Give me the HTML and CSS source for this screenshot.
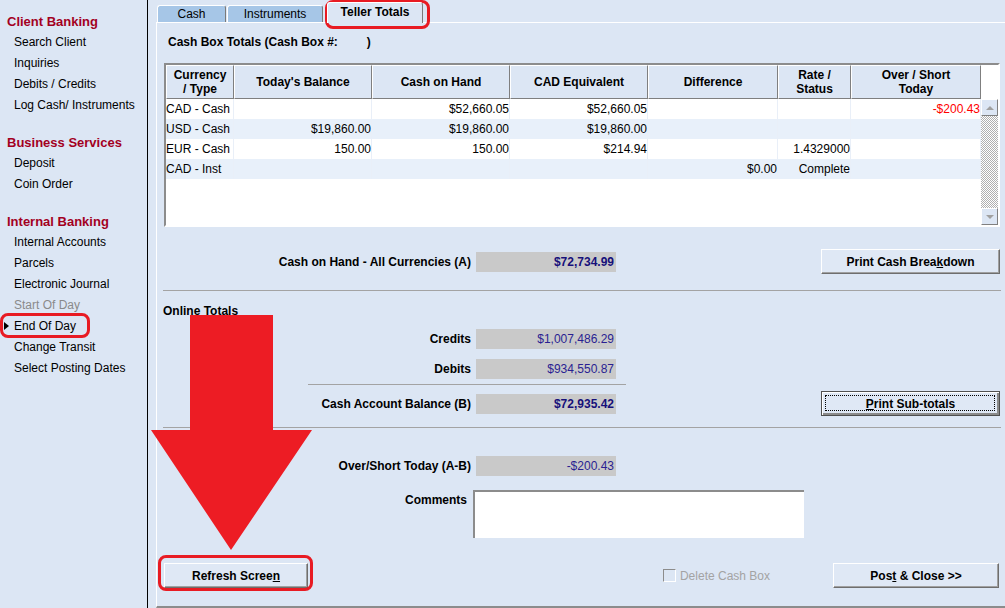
FILE: index.html
```html
<!DOCTYPE html>
<html>
<head>
<meta charset="utf-8">
<title>Teller Totals</title>
<link rel="stylesheet" href="styles.css">
</head>
<body>
<div class="app">
  <nav class="sidebar">
    <div class="group">
      <div class="group-title">Client Banking</div>
      <div class="item">Search Client</div>
      <div class="item">Inquiries</div>
      <div class="item">Debits / Credits</div>
      <div class="item">Log Cash/ Instruments</div>
    </div>
    <div class="group">
      <div class="group-title">Business Services</div>
      <div class="item">Deposit</div>
      <div class="item">Coin Order</div>
    </div>
    <div class="group">
      <div class="group-title">Internal Banking</div>
      <div class="item">Internal Accounts</div>
      <div class="item">Parcels</div>
      <div class="item">Electronic Journal</div>
      <div class="item disabled">Start Of Day</div>
      <div class="item current">End Of Day</div>
      <div class="item">Change Transit</div>
      <div class="item">Select Posting Dates</div>
    </div>
  </nav>

  <main class="main">
    <div class="tabs">
      <div class="tab tab-cash">Cash</div>
      <div class="tab tab-inst">Instruments</div>
      <div class="tab tab-teller active">Teller Totals</div>
    </div>

    <section class="panel">
      <div class="box-title">Cash Box Totals (Cash Box #:<span class="box-gap"></span>)</div>

      <div class="table">
        <div class="tcols">
          <div class="thead">
            <div class="th">Currency<br>/ Type</div>
            <div class="th">Today's Balance</div>
            <div class="th">Cash on Hand</div>
            <div class="th">CAD Equivalent</div>
            <div class="th">Difference</div>
            <div class="th">Rate /<br>Status</div>
            <div class="th">Over / Short<br>Today</div>
          </div>
          <div class="tbody">
            <div class="trow">
              <div class="td">CAD - Cash</div>
              <div class="td"></div>
              <div class="td">$52,660.05</div>
              <div class="td">$52,660.05</div>
              <div class="td"></div>
              <div class="td"></div>
              <div class="td neg">-$200.43</div>
            </div>
            <div class="trow alt">
              <div class="td">USD - Cash</div>
              <div class="td">$19,860.00</div>
              <div class="td">$19,860.00</div>
              <div class="td">$19,860.00</div>
              <div class="td"></div>
              <div class="td"></div>
              <div class="td"></div>
            </div>
            <div class="trow">
              <div class="td">EUR - Cash</div>
              <div class="td">150.00</div>
              <div class="td">150.00</div>
              <div class="td">$214.94</div>
              <div class="td"></div>
              <div class="td">1.4329000</div>
              <div class="td"></div>
            </div>
            <div class="trow alt">
              <div class="td">CAD - Inst</div>
              <div class="td"></div>
              <div class="td"></div>
              <div class="td"></div>
              <div class="td">$0.00</div>
              <div class="td">Complete</div>
              <div class="td"></div>
            </div>
          </div>
        </div>
        <div class="scroll">
          <div class="scroll-head"></div>
          <div class="sbtn"><span class="tri-up"></span></div>
          <div class="track"></div>
          <div class="sbtn"><span class="tri-down"></span></div>
        </div>
      </div>

      <div class="frow r-cash">
        <div class="flabel">Cash on Hand - All Currencies (A)</div>
        <div class="fval strong">$72,734.99</div>
        <button class="btn btn-wide"><span>Print Cash Brea<u>k</u>down</span></button>
      </div>

      <div class="sep sep1"></div>

      <div class="section-title">Online Totals</div>

      <div class="frow r-credits">
        <div class="flabel">Credits</div>
        <div class="fval">$1,007,486.29</div>
      </div>
      <div class="frow r-debits">
        <div class="flabel">Debits</div>
        <div class="fval">$934,550.87</div>
      </div>
      <div class="subline"></div>
      <div class="frow r-balance">
        <div class="flabel">Cash Account Balance (B)</div>
        <div class="fval strong">$72,935.42</div>
        <button class="btn btn-wide default"><span><u>P</u>rint Sub-totals</span></button>
      </div>

      <div class="sep sep2"></div>

      <div class="frow r-over">
        <div class="flabel">Over/Short Today (A-B)</div>
        <div class="fval">-$200.43</div>
      </div>

      <div class="comments-row">
        <div class="flabel comments-label">Comments</div>
        <div class="comments-box"></div>
      </div>

      <div class="bottom-row">
        <button class="btn btn-refresh"><span>Refresh Scree<u>n</u></span></button>
        <div class="check-group">
          <span class="checkbox"></span>
          <span class="check-label">Delete Cash Box</span>
        </div>
        <button class="btn btn-post"><span>Pos<u>t</u> &amp; Close &gt;&gt;</span></button>
      </div>
    </section>
  </main>
</div>

<div class="anno anno-tab"></div>
<div class="anno anno-eod"></div>
<div class="anno anno-refresh"></div>
<svg class="arrow" width="162" height="236" viewBox="0 0 162 236">
  <path d="M39 0 H122 V115 H161 L80 235 L0 115 H39 Z" fill="#ed1c24"/>
</svg>
</body>
</html>
```

FILE: styles.css
```css
* {
  box-sizing: border-box;
  margin: 0;
  padding: 0;
}

html, body {
  width: 1005px;
  height: 608px;
  overflow: hidden;
}

body {
  background: #dce6f4;
  font-family: "Liberation Sans", Arial, sans-serif;
  font-size: 12px;
  color: #000;
  position: relative;
}

.app {
  display: flex;
  height: 608px;
}

/* ---------- sidebar ---------- */
.sidebar {
  width: 148px;
  flex: none;
  border-right: 1px solid #000;
  padding-top: 11px;
}

.group {
  margin-bottom: 16px;
}

.group-title {
  font-size: 13px;
  font-weight: bold;
  color: #a3001f;
  line-height: 21px;
  padding-left: 7px;
}

.item {
  line-height: 21px;
  padding-left: 14px;
  position: relative;
  white-space: nowrap;
}

.item.disabled {
  color: #8a8a8a;
}

.item.current::before {
  content: "";
  position: absolute;
  left: 4px;
  top: 6px;
  border-left: 5px solid #000;
  border-top: 4px solid transparent;
  border-bottom: 4px solid transparent;
}

/* ---------- main ---------- */
.main {
  flex: 1;
  padding-left: 8px;
  display: flex;
  flex-direction: column;
}

.tabs {
  height: 22px;
  display: flex;
  align-items: flex-end;
  padding-left: 1px;
}

.tab {
  height: 17px;
  background: #a6c6e7;
  border: 1px solid #fff;
  border-bottom: none;
  border-right-color: #7a7a7a;
  border-radius: 3px 3px 0 0;
  text-align: center;
  line-height: 17px;
  margin-right: 1px;
}

.tab-cash {
  width: 69px;
}

.tab-inst {
  width: 96px;
}

.tab-teller {
  width: 96px;
  margin-left: 3px;
}

.tab.active {
  height: 21px;
  margin-bottom: -1px;
  background: #dce6f4;
  font-weight: bold;
  line-height: 19px;
  position: relative;
  z-index: 1;
}

.panel {
  height: 586px;
  border-top: 1px solid #fff;
  border-left: 1px solid #fff;
  border-bottom: 2px solid #8c8c8c;
  padding: 0 5px 0 7px;
}

.box-title {
  margin-top: 12px;
  line-height: 14px;
  font-weight: bold;
  padding-left: 4px;
}

.box-gap {
  display: inline-block;
  width: 29px;
}

/* ---------- table ---------- */
.table {
  margin-top: 14px;
  height: 164px;
  display: flex;
  border: 2px solid;
  border-color: #8c8c8c #fff #fff #8c8c8c;
  background: #fff;
}

.tcols {
  width: 815px;
}

.thead,
.trow {
  display: grid;
  grid-template-columns: 68px 138px 138px 138px 130px 73px 130px;
}

.thead {
  height: 34px;
}

.th {
  background: #dce6f4;
  border: 1px solid;
  border-color: #fff #7f7f7f #7f7f7f #fff;
  font-weight: bold;
  line-height: 14px;
  display: flex;
  align-items: center;
  justify-content: center;
  text-align: center;
}

.trow {
  height: 20px;
  line-height: 20px;
  background: #fff;
}

.trow.alt {
  background: #e8f0fa;
}

.td {
  text-align: right;
  white-space: nowrap;
  border-right: 1px solid #e9eff8;
}

.td:first-child {
  text-align: left;
}

.td.neg {
  color: #ff0000;
}

.scroll {
  width: 17px;
  display: flex;
  flex-direction: column;
}

.scroll-head {
  height: 34px;
  background: #fff;
}

.sbtn {
  height: 17px;
  flex: none;
  background: #dce6f4;
  border: 1px solid;
  border-color: #fff #808080 #808080 #fff;
  display: flex;
  align-items: center;
  justify-content: center;
}

.tri-up {
  border-bottom: 4px solid #a0a0a0;
  border-left: 4px solid transparent;
  border-right: 4px solid transparent;
}

.tri-down {
  border-top: 4px solid #a0a0a0;
  border-left: 4px solid transparent;
  border-right: 4px solid transparent;
}

.track {
  flex: 1;
  background: repeating-conic-gradient(#b0b0b0 0 25%, #fff 0 50%) 0 0 / 2px 2px;
}

/* ---------- form rows ---------- */
.frow {
  display: grid;
  grid-template-columns: 307px 140px 1fr;
  column-gap: 5px;
  align-items: center;
  height: 20px;
}

.flabel {
  text-align: right;
  font-weight: bold;
  white-space: nowrap;
}

.fval {
  height: 20px;
  line-height: 20px;
  background: #c9c9c9;
  text-align: right;
  padding-right: 2px;
  color: #2a1f92;
}

.fval.strong {
  font-weight: bold;
  color: #16107a;
}

.r-cash {
  margin-top: 22px;
  height: 25px;
}

.r-credits {
  margin-top: 11px;
}

.r-debits {
  margin-top: 10px;
}

.r-balance {
  margin-top: 6px;
  height: 25px;
}

.r-over {
  margin-top: 28px;
}

.sep {
  height: 1px;
  background: #a3a3a3;
  margin: 0 -1px;
}

.sep1 {
  margin-top: 16px;
}

.sep2 {
  margin-top: 11px;
}

.section-title {
  margin-top: 13px;
  line-height: 14px;
  font-weight: bold;
  margin-left: -1px;
}

.subline {
  margin-top: 5px;
  margin-left: 144px;
  width: 318px;
  height: 1px;
  background: #a3a3a3;
}

.comments-row {
  margin-top: 14px;
  display: grid;
  grid-template-columns: 303px 331px;
  column-gap: 6px;
  height: 48px;
}

.comments-label {
  padding-top: 3px;
  line-height: 14px;
}

.comments-box {
  background: #fff;
  border-top: 2px solid #8c8c8c;
  border-left: 2px solid #8c8c8c;
}

.bottom-row {
  margin-top: 25px;
  height: 25px;
  display: flex;
  align-items: center;
}

.check-group {
  margin-left: auto;
  margin-right: 63px;
  display: flex;
  align-items: center;
  color: #a3a3a3;
}

.checkbox {
  width: 13px;
  height: 13px;
  border: 1px solid;
  border-color: #8c8c8c #fff #fff #8c8c8c;
  margin-right: 4px;
}

/* ---------- buttons ---------- */
.btn {
  height: 25px;
  background: #dfe8f5;
  border: 1px solid;
  border-color: #fff #6e6e6e #6e6e6e #fff;
  box-shadow: inset -1px -1px 0 #a0a0a0;
  font: bold 12px "Liberation Sans", Arial, sans-serif;
  color: #000;
  display: flex;
  align-items: center;
  justify-content: center;
  position: relative;
}

.btn-wide {
  width: 179px;
  justify-self: end;
}

.btn.default {
  border-color: #505050;
  box-shadow: inset 1px 1px 0 #fff, inset -2px -2px 0 #8a8a8a;
}

.btn.default::after {
  content: "";
  position: absolute;
  left: 3px;
  top: 3px;
  right: 4px;
  bottom: 4px;
  border: 1px dotted #000;
}

.btn-refresh {
  width: 144px;
}

.btn-post {
  width: 166px;
  margin-right: 1px;
}

/* ---------- annotations ---------- */
.anno {
  position: absolute;
  border: 3px solid #e81b23;
  border-radius: 8px;
}

.anno-tab {
  left: 325px;
  top: 0;
  width: 105px;
  height: 29px;
}

.anno-eod {
  left: 0;
  top: 313px;
  width: 90px;
  height: 25px;
}

.anno-refresh {
  left: 158px;
  top: 555px;
  width: 155px;
  height: 36px;
}

.arrow {
  position: absolute;
  left: 151px;
  top: 315px;
}
```
